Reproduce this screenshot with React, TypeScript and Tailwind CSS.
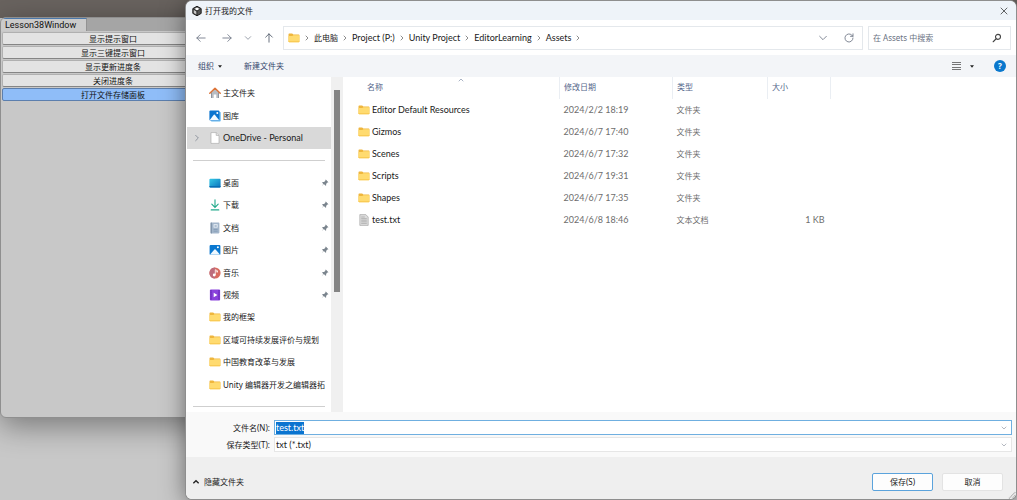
import React, { useEffect, useRef } from 'react';

type IconName =
  | 'home'
  | 'gallery'
  | 'page'
  | 'desktop'
  | 'download'
  | 'document'
  | 'picture'
  | 'music'
  | 'video'
  | 'folder';

interface Place {
  name: string;
  icon: IconName;
  pinned?: boolean;
  selected?: boolean;
}

interface FileEntry {
  name: string;
  date: string;
  type: string;
  size?: string;
}

const editorActions = ['显示提示窗口', '显示三键提示窗口', '显示更新进度条', '关闭进度条', '打开文件存储面板'];

const crumbs = ['Project (P:)', 'Unity Project', 'EditorLearning', 'Assets'];

const roots: Place[] = [
  { name: '主文件夹', icon: 'home' },
  { name: '图库', icon: 'gallery' },
  { name: 'OneDrive - Personal', icon: 'page', selected: true },
];

const places: Place[] = [
  { name: '桌面', icon: 'desktop', pinned: true },
  { name: '下载', icon: 'download', pinned: true },
  { name: '文档', icon: 'document', pinned: true },
  { name: '图片', icon: 'picture', pinned: true },
  { name: '音乐', icon: 'music', pinned: true },
  { name: '视频', icon: 'video', pinned: true },
  { name: '我的框架', icon: 'folder' },
  { name: '区域可持续发展评价与规划', icon: 'folder' },
  { name: '中国教育改革与发展', icon: 'folder' },
  { name: 'Unity 编辑器开发之编辑器拓', icon: 'folder' },
];

const files: FileEntry[] = [
  { name: 'Editor Default Resources', date: '2024/2/2 18:19', type: '文件夹' },
  { name: 'Gizmos', date: '2024/6/7 17:40', type: '文件夹' },
  { name: 'Scenes', date: '2024/6/7 17:32', type: '文件夹' },
  { name: 'Scripts', date: '2024/6/7 19:31', type: '文件夹' },
  { name: 'Shapes', date: '2024/6/7 17:35', type: '文件夹' },
  { name: 'test.txt', date: '2024/6/8 18:46', type: '文本文档', size: '1 KB' },
];

const FolderIcon = () => (
  <svg viewBox="0 0 12 12" className="h-3 w-3 shrink-0">
    <path d="M.5 2.2q0-.7.7-.7h3l1.1 1.1h5.4q.7 0 .7.7v6.2H.5z" fill="#efb63d" />
    <path d="M.5 4h3.9l1-.8h6v6.3q0 .7-.7.7H1.2q-.7 0-.7-.7z" fill="#ffdb70" />
    <path d="M.5 9h10.9v.6q0 .6-.7.6H1.2q-.7 0-.7-.6z" fill="#f9cb55" />
  </svg>
);

const PlaceIcon = ({ name }: { name: IconName }) => {
  if (name === 'folder') return <FolderIcon />;
  return (
    <svg viewBox="0 0 12 12" className="h-3 w-3 shrink-0">
      {name === 'home' && (
        <>
          <path d="M2 5.2 6 1.8l4 3.4v5.9H7.3V7.4H4.7v3.7H2z" fill="#b9bdc3" />
          <path d="M2 5.8v5.3h1V5zM9 5v6.1h1V5.8z" fill="#8f959d" />
          <path d="m.8 6.3 5.2-5 5.2 5" fill="none" stroke="#dd7438" strokeWidth="1.5" strokeLinecap="round" strokeLinejoin="round" />
        </>
      )}
      {name === 'gallery' && (
        <>
          <rect x="1.8" y="1.8" width="9.9" height="9.8" rx="1" fill="#64b7ee" />
          <rect x=".4" y=".6" width="10" height="9.8" rx="1" fill="#0a74cf" />
          <path d="m.6 10.2 4.2-5.4q.5-.5 1 0l4.4 5.4z" fill="#f1f9ff" />
          <circle cx="8.3" cy="2.9" r="1" fill="#fff" />
        </>
      )}
      {name === 'page' && (
        <>
          <path d="M2 .6h5.2L10 3.4v8H2z" fill="#fff" stroke="#a3a3a3" strokeWidth=".6" />
          <path d="M7.2.6v2.8H10" fill="#e8e8e8" stroke="#a3a3a3" strokeWidth=".6" />
        </>
      )}
      {name === 'desktop' && (
        <>
          <defs>
            <linearGradient id="desk" x1="0" y1="0" x2="1" y2="1">
              <stop offset="0" stopColor="#35c9e6" />
              <stop offset="1" stopColor="#0871bd" />
            </linearGradient>
          </defs>
          <rect x=".4" y="1.8" width="11.2" height="8.6" rx="1" fill="url(#desk)" />
          <path d="M.4 9h11.2v.5q0 .9-.9.9H1.3q-.9 0-.9-.9z" fill="#086db3" />
        </>
      )}
      {name === 'download' && (
        <path d="M6 .8v7.4M2.8 5.2 6 8.4l3.2-3.2M2.2 10.9h7.6" fill="none" stroke="#23aa8b" strokeWidth="1.1" strokeLinecap="round" />
      )}
      {name === 'document' && (
        <>
          <rect x="1.6" y=".6" width="8.8" height="10.8" rx=".8" fill="#a3b6cb" />
          <rect x="1.6" y=".6" width="1.4" height="10.8" fill="#8195ab" />
          <rect x="4.6" y="2.2" width="4" height="3.4" fill="#f2f7fc" />
          <path d="M5.4 3.4h2.4M5.4 4.6h2.4M4.6 7.5h4M4.6 9.2h4" stroke="#7690ad" strokeWidth=".6" />
        </>
      )}
      {name === 'picture' && (
        <>
          <rect x=".6" y="1" width="10.8" height="10" rx="1" fill="#0a78d0" />
          <path d="m.9 10.7 4.5-5.1q.6-.5 1.2 0l4.5 5.1z" fill="#eef8ff" />
          <circle cx="8.9" cy="3.2" r="1" fill="#fff" />
        </>
      )}
      {name === 'music' && (
        <>
          <circle cx="6" cy="6" r="5.6" fill="#d96b5f" />
          <path d="M1 8.3A5.6 5.6 0 0 1 6 .4v11.2a5.6 5.6 0 0 1-5-3.3z" fill="#bd6c7c" />
          <path d="M6.3 8.2V2.7l2.2 1.1v1.4L6.9 4.5" fill="none" stroke="#fff" strokeWidth=".8" />
          <circle cx="5.2" cy="8" r="1.4" fill="#fff" />
        </>
      )}
      {name === 'video' && (
        <>
          <rect x=".9" y=".6" width="10.2" height="10.8" rx="1" fill="#8a42dc" />
          <path d="M2 1.4v9.2M10 1.4v9.2" stroke="#4d169a" strokeWidth="1" strokeDasharray="1.1 .9" />
          <path d="M4.7 3.7v4.6L8.4 6z" fill="#fff" />
        </>
      )}
    </svg>
  );
};

const TextFileIcon = () => (
  <svg viewBox="0 0 12 12" className="h-3 w-3 shrink-0">
    <path d="M1.8.6h6l2.4 2.4v8.4H1.8z" fill="#dcdcdc" stroke="#9c9c9c" strokeWidth=".6" />
    <path d="M3.2 3h3.6M3.2 4.6h5.6M3.2 6.2h5.6M3.2 7.8h5.6M3.2 9.4h5.6" stroke="#9a9a9a" strokeWidth=".6" />
  </svg>
);

const PinIcon = () => (
  <svg viewBox="0 0 10 10" className="ml-auto h-2 w-2 shrink-0">
    <path d="m6 .7 3.3 3.3-.7.5-.7-.1-1.5 1.7.1 1.6-.8.8-2.1-2.1L.8 9.2l2.1-3L1.4 4.4l.8-.8 1.7.1L5.6 2l-.1-.7z" fill="#7b858e" />
  </svg>
);

const Stroke = ({ d, className }: { d: string; className: string }) => (
  <svg viewBox="0 0 12 12" className={`shrink-0 ${className}`} fill="none" stroke="currentColor" strokeLinecap="round" strokeLinejoin="round">
    <path d={d} />
  </svg>
);

const CHEVRON_DOWN = 'm2 4 4 4 4-4';
const CHEVRON_RIGHT = 'm4 2 4 4-4 4';
const CHEVRON_UP = 'm2 8 4-4 4 4';

const PlaceRow = ({ place }: { place: Place }) => (
  <li className="flex min-h-5 flex-1">
    <button
      type="button"
      className={`flex w-full items-center gap-0.5 overflow-hidden whitespace-nowrap text-left ${
        place.pinned ? 'pr-0.5' : ''
      } ${place.selected ? "bg-[#d9d9d9] font-['Lato',sans-serif] text-[9px]" : 'hover:bg-gray-100'}`}
    >
      <span className="flex w-5 shrink-0 justify-center text-gray-500">
        {place.selected && <Stroke d={CHEVRON_RIGHT} className="h-2 w-2" />}
      </span>
      <PlaceIcon name={place.icon} />
      <span>{place.name}</span>
      {place.pinned && <PinIcon />}
    </button>
  </li>
);

const EditorWindow = () => (
  <section className="absolute left-0 top-[17px] flex h-[401px] w-[226px] flex-col overflow-hidden rounded-md border border-[#8f8f8f] bg-[#c8c8c8] shadow-[0_8px_30px_rgba(0,0,0,0.4)]">
    <header className="flex bg-[#a5a5a5]">
      <h2 className="w-[86px] border-t border-r border-t-[#4b78ab] border-r-[#929292] bg-[#cbcbcb] pl-1 font-['Roboto',sans-serif] text-[9px] leading-[12px] text-[#111]">
        Lesson38Window
      </h2>
    </header>
    <div className="flex flex-col gap-px px-px pt-px">
      {editorActions.map((label, i) => (
        <button
          key={label}
          type="button"
          className={`h-[13px] rounded-xs border text-[8px] leading-[11px] text-[#111] ${
            i === editorActions.length - 1
              ? 'border-[#5c7fae] bg-[#8fbdf8]'
              : 'border-[#b0b0b0] border-b-[#858585] bg-[#e3e3e3]'
          }`}
        >
          {label}
        </button>
      ))}
    </div>
  </section>
);

const TitleBar = () => (
  <header className="flex h-[19px] shrink-0 items-center gap-[3px] bg-[#eef3f9] pl-1.5 pr-2">
    <svg viewBox="0 0 12 12" className="h-2.5 w-2.5">
      <path d="m6 .3 5 2.8v5.8L6 11.7 1 8.9V3.1z" fill="#555" stroke="#1c1c1c" strokeWidth="1.2" />
      <path d="M6 1.8 9.2 3.6 6 5.5 2.8 3.6z" fill="#fff" />
      <path d="M2.2 4.7 5.4 6.5v3.6L2.2 8.3z" fill="#c8c8c8" />
      <path d="M6 6v5M6 6l4.5-2.6M6 6 1.5 3.4" stroke="#222" strokeWidth=".9" />
    </svg>
    <h1>打开我的文件</h1>
    <button type="button" aria-label="关闭" className="ml-auto">
      <Stroke d="m1.5 1.5 9 9m0-9-9 9" className="h-2 w-2" />
    </button>
  </header>
);

const AddressRow = () => (
  <div className="flex h-[35px] shrink-0 items-center bg-white pl-2.5 pr-[5px]">
    <nav className="flex items-center pr-[9px]">
      <button type="button" aria-label="返回" className="mr-4 text-gray-500">
        <Stroke d="M11 6H1m4-4L1 6l4 4" className="h-2.5 w-2.5" />
      </button>
      <button type="button" aria-label="前进" className="mr-3 text-gray-500">
        <Stroke d="M1 6h10M7 2l4 4-4 4" className="h-2.5 w-2.5" />
      </button>
      <button type="button" aria-label="最近位置" className="mr-3 text-gray-500">
        <Stroke d={CHEVRON_DOWN} className="h-2 w-2" />
      </button>
      <button type="button" aria-label="向上" className="text-gray-600">
        <Stroke d="M6 11V1M2 5l4-4 4 4" className="h-2.5 w-2.5" />
      </button>
    </nav>
    <div className="flex h-6 min-w-0 flex-1 items-center border border-[#e4e8ec] pl-1 pr-2">
      <FolderIcon />
      <Stroke d={CHEVRON_RIGHT} className="mx-1 h-1.5 w-1.5" />
      <button type="button">此电脑</button>
      <Stroke d={CHEVRON_RIGHT} className="mx-1 h-1.5 w-1.5" />
      {crumbs.map((crumb) => (
        <React.Fragment key={crumb}>
          <button type="button" className="whitespace-nowrap font-['Lato',sans-serif] text-[9px]">
            {crumb}
          </button>
          <Stroke d={CHEVRON_RIGHT} className="mx-1 h-1.5 w-1.5" />
        </React.Fragment>
      ))}
      <button type="button" aria-label="以前的位置" className="ml-auto mr-4 text-gray-500">
        <Stroke d={CHEVRON_DOWN} className="h-2.5 w-2.5" />
      </button>
      <button type="button" aria-label="刷新" className="text-gray-500">
        <Stroke d="M10.8 6A4.8 4.8 0 1 1 9.3 2.5L10.6 3.8M10.8 1v3h-3" className="h-2.5 w-2.5" />
      </button>
    </div>
    <label className="ml-[5px] flex h-6 w-[143px] items-center border border-[#e4e8ec] pl-1 pr-2">
      <input
        type="search"
        aria-label="在 Assets 中搜索"
        placeholder="在 Assets 中搜索"
        className="min-w-0 flex-1 outline-none placeholder:text-gray-500"
      />
      <svg viewBox="0 0 12 12" className="h-2.5 w-2.5" fill="none" stroke="#444" strokeWidth="1.3">
        <circle cx="7.2" cy="4.6" r="3" />
        <path d="m5 6.9-3.6 3.6" strokeLinecap="round" />
      </svg>
    </label>
  </div>
);

const Toolbar = () => (
  <div className="flex h-[22px] shrink-0 items-center bg-[#f3f5f8] pl-3 pr-2.5 text-[#34466b]">
    <button type="button" className="mr-[22px] flex items-center gap-1">
      组织
      <svg viewBox="0 0 6 4" className="h-[3px] w-1">
        <path d="M0 0h6L3 4z" fill="#222" />
      </svg>
    </button>
    <button type="button">新建文件夹</button>
    <button type="button" aria-label="更改视图" className="ml-auto mr-5 flex items-center gap-2">
      <svg viewBox="0 0 10 10" className="h-2.5 w-2.5" stroke="#555">
        <path d="M0 1.5h9M0 3.5h9M0 6.5h9M0 8.5h9" strokeWidth=".8" />
      </svg>
      <svg viewBox="0 0 6 4" className="h-[3px] w-1">
        <path d="M0 0h6L3 4z" fill="#222" />
      </svg>
    </button>
    <button type="button" aria-label="帮助" className="h-3 w-3 rounded-full bg-[#0a78cd] text-[8px] font-bold leading-3 text-white">
      ?
    </button>
  </div>
);

const Sidebar = () => (
  <aside className="flex w-[157px] shrink-0">
    <div className="flex min-w-0 flex-1 flex-col pl-px pt-[5px]">
      <ul className="flex flex-1 flex-col">
        {roots.map((place) => (
          <PlaceRow key={place.name} place={place} />
        ))}
        <li className="flex min-h-5 flex-1 items-center px-1.5">
          <hr className="w-full border-[#cfcfcf]" />
        </li>
        {places.map((place) => (
          <PlaceRow key={place.name} place={place} />
        ))}
      </ul>
      <div className="h-4 px-1.5 pt-2.5">
        <hr className="border-[#cfcfcf]" />
      </div>
    </div>
    <div className="w-3 bg-[#f0f0f0] px-[3px] pt-[13px]">
      <div className="h-[202px] bg-[#858585]" />
    </div>
  </aside>
);

const FileTable = () => (
  <div className="min-w-0 flex-1">
    <table className="w-[488px] table-fixed border-collapse text-left">
      <colgroup>
        <col />
        <col className="w-[113px]" />
        <col className="w-[95px]" />
        <col className="w-[63px]" />
      </colgroup>
      <thead className="text-[#53668a]">
        <tr className="h-[22px]">
          <th className="relative border-r border-[#eaeef3] pb-0.5 pl-6 font-normal">
            名称
            <Stroke d={CHEVRON_UP} className="absolute left-[115px] top-0 h-1.5 w-1.5" />
          </th>
          <th className="border-r border-[#eaeef3] pb-0.5 pl-1 font-normal">修改日期</th>
          <th className="border-r border-[#eaeef3] pb-0.5 pl-1 font-normal">类型</th>
          <th className="border-r border-[#eaeef3] pb-0.5 pl-1 font-normal">大小</th>
        </tr>
      </thead>
      <tbody className="text-[#6d6d6d]">
        {files.map((file) => (
          <tr key={file.name} className="h-[22px] hover:bg-blue-50">
            <td className="pl-[15px] font-['Lato',sans-serif] text-[9px] text-[#1a1a1a]">
              <span className="flex items-center gap-0.5">
                {file.size ? <TextFileIcon /> : <FolderIcon />}
                {file.name}
              </span>
            </td>
            <td className="pl-1 font-['Lato',sans-serif] text-[9px]">{file.date}</td>
            <td className="pl-1">{file.type}</td>
            <td className="pr-1.5 text-right font-['Lato',sans-serif] text-[9px]">{file.size}</td>
          </tr>
        ))}
      </tbody>
    </table>
  </div>
);

const SaveFields = () => {
  const nameRef = useRef<HTMLInputElement>(null);

  useEffect(() => {
    nameRef.current?.focus();
    nameRef.current?.select();
  }, []);

  return (
    <div className="flex h-[45px] shrink-0 flex-col bg-[#f9f9f9] pr-1 pt-2">
      <div className="flex items-center">
        <label htmlFor="file-name" className="w-[88px] pr-1 text-right">
          文件名(N):
        </label>
        <div className="flex h-[15px] flex-1 items-center border border-[#6fafe0] bg-white pl-px pr-1">
          <input
            id="file-name"
            ref={nameRef}
            defaultValue="test.txt"
            className="min-w-0 flex-1 font-['Lato',sans-serif] text-[9px] outline-none selection:bg-[#0a74d0] selection:text-white"
          />
          <Stroke d={CHEVRON_DOWN} className="h-1.5 w-1.5 text-gray-500" />
        </div>
      </div>
      <div className="mt-0.5 flex items-center">
        <label htmlFor="file-type" className="w-[88px] pr-1 text-right">
          保存类型(T):
        </label>
        <div className="relative flex h-[15px] flex-1 items-center border border-[#e6e6e6] bg-white">
          <select id="file-type" className="w-full appearance-none pl-px font-['Lato',sans-serif] text-[9px] outline-none">
            <option>txt (*.txt)</option>
          </select>
          <Stroke d={CHEVRON_DOWN} className="pointer-events-none absolute right-1 h-1.5 w-1.5 text-gray-500" />
        </div>
      </div>
    </div>
  );
};

const DialogFooter = () => (
  <footer className="relative flex h-[42px] shrink-0 items-center bg-[#efefef] pl-1.5 pr-[13px] pt-[7px]">
    <button type="button" className="flex items-center gap-1">
      <svg viewBox="0 0 12 12" className="h-2 w-2" fill="none" stroke="#222" strokeWidth="2">
        <path d={CHEVRON_UP} />
      </svg>
      隐藏文件夹
    </button>
    <button type="button" className="ml-auto h-[18px] w-[61px] rounded-xs border border-[#5ba3dc] bg-[#fdfdfd]">
      保存(S)
    </button>
    <button type="button" className="ml-[9px] h-[18px] w-[61px] rounded-xs border border-[#e3e3e3] bg-[#fdfdfd]">
      取消
    </button>
    <svg viewBox="0 0 8 8" className="absolute bottom-0 right-0 h-2 w-2">
      <path d="M1 7.5 7.5 1M4 7.5 7.5 4" stroke="#a8a8a8" strokeWidth="1.2" strokeDasharray="1 .6" />
    </svg>
  </footer>
);

export default function App() {
  return (
    <main className="relative h-screen min-h-[500px] overflow-hidden bg-[#c8c8c8] font-['Noto_Sans','Noto_Sans_CJK_SC',sans-serif] text-[8px] leading-[12px] text-[#1a1a1a]">
      <div className="h-[18px] bg-[#69635f]" />
      <EditorWindow />
      <section className="absolute bottom-px left-[186px] right-px top-px flex flex-col overflow-hidden rounded-md bg-white shadow-[0_0_0_1px_#8e8e8e,0_4px_24px_rgba(0,0,0,0.5)]">
        <TitleBar />
        <AddressRow />
        <Toolbar />
        <div className="flex min-h-0 flex-1">
          <Sidebar />
          <FileTable />
        </div>
        <SaveFields />
        <DialogFooter />
      </section>
    </main>
  );
}
